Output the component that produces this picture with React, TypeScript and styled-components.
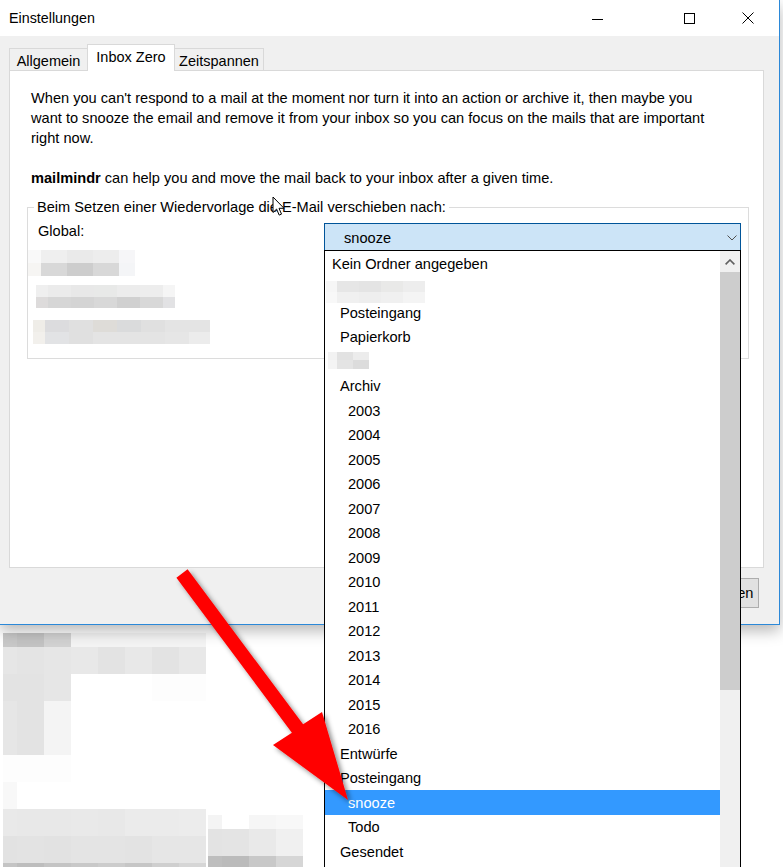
import styled, { createGlobalStyle } from 'styled-components';

const GlobalStyle = createGlobalStyle`
  body {
    margin: 0;
    background: #fff;
  }
  * {
    box-sizing: border-box;
  }
`;

type Cell = [number, string];
type MosaicRow = { h: number; cells: Cell[] };

const Page = styled.div`
  position: relative;
  width: 783px;
  height: 867px;
  overflow: hidden;
  background: #fff;
  font-family: 'Liberation Sans', Arial, sans-serif;
  font-size: 14.6px;
  color: #000;
`;

const Window = styled.div`
  position: relative;
  z-index: 2;
  width: 780px;
  height: 625px;
  display: flex;
  flex-direction: column;
  background: #f0f0f0;
  border-right: 1px solid #2b88d8;
  border-bottom: 1px solid #2b88d8;
  box-shadow: 0 6px 14px rgba(0, 0, 0, 0.28);
`;

const TitleBar = styled.div`
  height: 36px;
  flex-shrink: 0;
  display: flex;
  align-items: center;
  padding-left: 9px;
  background: #fff;
`;

const Title = styled.span`
  font-size: 14.3px;
`;

const Captions = styled.div`
  margin-left: auto;
  padding-right: 25px;
  display: flex;
  align-items: center;
`;

const CaptionIcon = styled.svg<{ $gap?: number }>`
  display: block;
  margin-left: ${(p) => p.$gap ?? 0}px;
  stroke: #000;
  stroke-width: 1;
  fill: none;
`;

const Body = styled.div`
  flex: 1;
  display: flex;
  flex-direction: column;
  padding: 9px 15px 0 9px;
`;

const TabStrip = styled.div`
  position: relative;
  z-index: 1;
  height: 26px;
  margin-bottom: -1px;
  display: flex;
  align-items: flex-end;
`;

const Tab = styled.div<{ $active?: boolean; $w: number }>`
  width: ${(p) => p.$w}px;
  height: ${(p) => (p.$active ? 27 : 23)}px;
  display: flex;
  justify-content: center;
  align-items: center;
  padding-top: ${(p) => (p.$active ? 0 : 2)}px;
  padding-bottom: ${(p) => (p.$active ? 2 : 0)}px;
  background: ${(p) => (p.$active ? '#fff' : '#f0f0f0')};
  border: 1px solid #d9d9d9;
  border-bottom: ${(p) => (p.$active ? 'none' : '1px solid #d9d9d9')};
  margin-right: -1px;
  font-size: 14.5px;
  white-space: nowrap;
`;

const Panel = styled.div`
  height: 498px;
  background: #fff;
  border: 1px solid #d9d9d9;
  padding: 17px 14px 0 17px;
`;

const Paragraph = styled.p`
  margin: 0 0 20px;
  padding: 0 26px 0 4px;
  line-height: 20px;

  &:last-of-type {
    margin-bottom: 0;
  }
`;

const GroupBox = styled.fieldset`
  margin: 9px 0 0;
  padding: 0 0 14px;
  min-width: 0;
  border: 1px solid #dcdcdc;
`;

const Legend = styled.legend`
  margin-left: 6px;
  padding: 0 3px;
  line-height: 20px;
`;

const FolderRow = styled.div`
  margin-top: 6px;
  display: flex;
  align-items: flex-start;
`;

const Label = styled.span`
  margin-left: 10px;
  line-height: 16px;
`;

const ComboWrap = styled.div`
  position: relative;
  z-index: 5;
  width: 417px;
  margin-left: auto;
  margin-right: 7px;
`;

const Combo = styled.div`
  height: 28px;
  display: flex;
  align-items: center;
  padding-left: 19px;
  padding-top: 1px;
  background: #cce4f7;
  border: 1px solid #005499;
`;

const Chevron = styled.svg`
  display: block;
  margin-left: auto;
  margin-right: 3px;
  fill: none;
  stroke: #505050;
  stroke-width: 1;
`;

const Popup = styled.div`
  position: absolute;
  left: 0;
  top: 27px;
  width: 417px;
  height: 660px;
  display: flex;
  background: #fff;
  border: 1px solid #000;
`;

const List = styled.div`
  flex: 1;
  display: flex;
  flex-direction: column;
`;

const Item = styled.div<{ $level: number; $selected?: boolean }>`
  height: 24.5px;
  flex-shrink: 0;
  display: flex;
  align-items: center;
  padding-top: 1px;
  padding-left: ${(p) => 7 + p.$level * 8}px;
  background: ${(p) => (p.$selected ? '#3399ff' : 'transparent')};
  color: ${(p) => (p.$selected ? '#fff' : '#000')};
  white-space: nowrap;
`;

const ScrollBar = styled.div`
  width: 20px;
  display: flex;
  flex-direction: column;
  background: #f0f0f0;
`;

const ScrollButton = styled.div`
  height: 21px;
  display: flex;
  justify-content: center;
  align-items: center;
`;

const Thumb = styled.div`
  height: 418px;
  background: #cdcdcd;
`;

const Footer = styled.div`
  display: flex;
  justify-content: flex-end;
  padding: 10px 5px 0 0;
`;

const Button = styled.div`
  width: 82px;
  height: 30px;
  display: flex;
  justify-content: center;
  align-items: center;
  padding-left: 6px;
  background: #e1e1e1;
  border: 1px solid #adadad;
`;

const MosaicBox = styled.div<{ $mt?: number; $ml?: number }>`
  display: flex;
  flex-direction: column;
  align-self: flex-start;
  margin-top: ${(p) => p.$mt ?? 0}px;
  margin-left: ${(p) => p.$ml ?? 0}px;
`;

const MosaicLine = styled.div<{ $h: number }>`
  height: ${(p) => p.$h}px;
  display: flex;
`;

const MosaicCell = styled.div<{ $w: number; $c: string }>`
  width: ${(p) => p.$w}px;
  background: ${(p) => p.$c};
`;

const Backdrop = styled.div`
  display: flex;
  padding: 8px 0 0 3px;
`;

const Overlay = styled.svg`
  position: absolute;
  left: 0;
  top: 0;
  z-index: 10;
  pointer-events: none;
`;

const Cursor = styled.svg`
  position: absolute;
  left: 272px;
  top: 196px;
  z-index: 11;
  pointer-events: none;
`;

function Mosaic({ rows, mt, ml }: { rows: MosaicRow[]; mt?: number; ml?: number }) {
  return (
    <MosaicBox $mt={mt} $ml={ml}>
      {rows.map((r, i) => (
        <MosaicLine key={i} $h={r.h}>
          {r.cells.map(([w, c], j) => (
            <MosaicCell key={j} $w={w} $c={c} />
          ))}
        </MosaicLine>
      ))}
    </MosaicBox>
  );
}

const blurA: MosaicRow[] = [
  { h: 13, cells: [[13, '#f9f9f9'], [26, '#efefef'], [26, '#eaeaea'], [26, '#ededed'], [16, '#f6f6f8']] },
  { h: 13, cells: [[13, '#f6f5f3'], [26, '#d8d8d8'], [26, '#cdcdcd'], [26, '#d8d8d8'], [16, '#f4f5f7']] },
];

const blurB: MosaicRow[] = [
  { h: 12, cells: [[12, '#efefef'], [23, '#ebebeb'], [23, '#e8e8e8'], [23, '#e8e9e8'], [23, '#ececec'], [23, '#ededed'], [12, '#f5f5f5']] },
  { h: 11, cells: [[12, '#dddbdb'], [23, '#d6d6d6'], [23, '#d4d4d4'], [23, '#d8d8d8'], [23, '#d0d0d0'], [23, '#d8d8d8'], [12, '#e2e2e4']] },
];

const blurC: MosaicRow[] = [
  { h: 12, cells: [[12, '#efede8'], [24, '#dcdcde'], [24, '#e0e0e0'], [24, '#dedcd8'], [24, '#dadbdc'], [24, '#e0e0e0'], [24, '#e4e4e4'], [21, '#e4e4e4']] },
  { h: 12, cells: [[12, '#f2f0ec'], [24, '#e2e3e5'], [24, '#e0e0e0'], [24, '#e4e4e4'], [24, '#e4e4e4'], [24, '#e4e4e4'], [24, '#e6e6e6'], [21, '#ececec']] },
];

const blurItem1: MosaicRow[] = [
  { h: 11, cells: [[11, '#f6f6f6'], [22, '#e6e6e6'], [22, '#e4e4e4'], [22, '#e9e9e8'], [22, '#ededed']] },
  { h: 11, cells: [[11, '#f8f8f8'], [22, '#f0f0f0'], [22, '#eeeeee'], [22, '#f0f0f0'], [22, '#f4f4f4']] },
];

const blurItem2: MosaicRow[] = [
  { h: 8, cells: [[9, '#f2f2f2'], [16, '#e2e2e2'], [16, '#ececec']] },
  { h: 9, cells: [[9, '#f4f4f4'], [16, '#e4e4e4'], [16, '#dcdcdc']] },
];

const blurBackLeft: MosaicRow[] = [
  { h: 14, cells: [[14, '#c8c8c8'], [27, '#c3c3c3'], [27, '#d2d2d2'], [135, '#f4f4f4']] },
  { h: 27, cells: [[14, '#e6e6e6'], [27, '#e4e4e4'], [27, '#e6e6e6'], [27, '#e8e8e8'], [27, '#e3e3e3'], [27, '#e8e8e8'], [27, '#e3e3e3'], [27, '#e8e8e8']] },
  { h: 27, cells: [[14, '#e3e3e3'], [27, '#e3e3e3'], [27, '#e6e6e6'], [81, '#ffffff'], [54, '#fdfdfd']] },
  { h: 27, cells: [[14, '#e6e6e6'], [27, '#e3e3e3'], [27, '#f4f4f4']] },
  { h: 27, cells: [[14, '#e6e6e6'], [27, '#e3e3e3'], [27, '#f4f4f4']] },
  { h: 27, cells: [[68, '#fdfdfd']] },
  { h: 27, cells: [[14, '#f8f8f8']] },
  { h: 27, cells: [[14, '#e9e9e9'], [27, '#e8e8e8'], [27, '#e8e8e8'], [27, '#e9e9e9'], [27, '#e8e8e8'], [27, '#ebebeb'], [27, '#ebebeb'], [27, '#ececec']] },
  { h: 27, cells: [[14, '#e2e2e2'], [27, '#e3e3e3'], [27, '#e2e2e2'], [27, '#e4e4e4'], [27, '#e4e4e4'], [27, '#e3e3e3'], [27, '#e6e6e6'], [27, '#e6e6e6']] },
  { h: 6, cells: [[14, '#c4c4c4'], [27, '#bdbdbd'], [27, '#c4c4c4'], [27, '#c8c8c8'], [27, '#cccccc'], [27, '#c6c6c6'], [27, '#cfcfcf'], [27, '#d6d6d6']] },
];

const blurBackRight: MosaicRow[] = [
  { h: 14, cells: [[14, '#f4f4f4'], [27, '#ffffff'], [27, '#f6f6f6'], [27, '#f8f8f8']] },
  { h: 27, cells: [[14, '#e3e3e3'], [27, '#e4e4e4'], [27, '#e9e9e9'], [27, '#f0f0f0']] },
  { h: 11, cells: [[14, '#bebebe'], [27, '#bbbbbb'], [27, '#c8c8c8'], [27, '#d6d6d6']] },
];

const years = ['2003', '2004', '2005', '2006', '2007', '2008', '2009', '2010', '2011', '2012', '2013', '2014', '2015', '2016'];

export default function App() {
  return (
    <Page>
      <GlobalStyle />
      <Window>
        <TitleBar>
          <Title>Einstellungen</Title>
          <Captions>
            <CaptionIcon width="11" height="11" viewBox="0 0 11 11">
              <path d="M0 6.5h11" />
            </CaptionIcon>
            <CaptionIcon $gap={81} width="11" height="11" viewBox="0 0 11 11">
              <rect x="0.5" y="0.5" width="10" height="10" />
            </CaptionIcon>
            <CaptionIcon $gap={47} width="12" height="12" viewBox="0 0 12 12">
              <path d="M0.5 0.5l11 11M11.5 0.5l-11 11" />
            </CaptionIcon>
          </Captions>
        </TitleBar>
        <Body>
          <TabStrip>
            <Tab $w={79}>Allgemein</Tab>
            <Tab $w={88} $active>Inbox Zero</Tab>
            <Tab $w={90}>Zeitspannen</Tab>
          </TabStrip>
          <Panel>
            <Paragraph>
              When you can't respond to a mail at the moment nor turn it into an action or archive it, then maybe you
              want to snooze the email and remove it from your inbox so you can focus on the mails that are important
              right now.
            </Paragraph>
            <Paragraph>
              <b>mailmindr</b> can help you and move the mail back to your inbox after a given time.
            </Paragraph>
            <GroupBox>
              <Legend>Beim Setzen einer Wiedervorlage die E-Mail verschieben nach:</Legend>
              <FolderRow>
                <Label>Global:</Label>
                <ComboWrap>
                  <Combo>
                    snooze
                    <Chevron width="10" height="6" viewBox="0 0 10 6">
                      <path d="M0.5 0.5l4.5 4.5 4.5-4.5" />
                    </Chevron>
                  </Combo>
                  <Popup>
                    <List>
                      <Item $level={0}>Kein Ordner angegeben</Item>
                      <Item $level={0}>
                        <Mosaic rows={blurItem1} ml={-6} mt={4} />
                      </Item>
                      <Item $level={1}>Posteingang</Item>
                      <Item $level={1}>Papierkorb</Item>
                      <Item $level={0}>
                        <Mosaic rows={blurItem2} ml={-4} mt={2} />
                      </Item>
                      <Item $level={1}>Archiv</Item>
                      {years.map((y) => (
                        <Item key={y} $level={2}>
                          {y}
                        </Item>
                      ))}
                      <Item $level={1}>Entwürfe</Item>
                      <Item $level={1}>Posteingang</Item>
                      <Item $level={2} $selected>
                        snooze
                      </Item>
                      <Item $level={2}>Todo</Item>
                      <Item $level={1}>Gesendet</Item>
                    </List>
                    <ScrollBar>
                      <ScrollButton>
                        <svg width="10" height="6" viewBox="0 0 10 6" fill="none" stroke="#606060" strokeWidth="1.6">
                          <path d="M0.6 5.4l4.4-4.4 4.4 4.4" />
                        </svg>
                      </ScrollButton>
                      <Thumb />
                    </ScrollBar>
                  </Popup>
                </ComboWrap>
              </FolderRow>
              <Mosaic rows={blurA} mt={-1} />
              <Mosaic rows={blurB} mt={9} ml={8} />
              <Mosaic rows={blurC} mt={12} ml={5} />
            </GroupBox>
          </Panel>
          <Footer>
            <Button>Schließen</Button>
          </Footer>
        </Body>
      </Window>
      <Backdrop>
        <Mosaic rows={blurBackLeft} />
        <Mosaic rows={blurBackRight} mt={182} ml={2} />
      </Backdrop>
      <Overlay width="783" height="867" viewBox="0 0 783 867">
        <defs>
          <filter id="arrowShadow" x="-20%" y="-20%" width="140%" height="140%">
            <feDropShadow dx="3" dy="3" stdDeviation="2.5" floodColor="#000" floodOpacity="0.45" />
          </filter>
        </defs>
        <polygon
          points="187.6,569.3 303.1,724.3 322,712 348,800 273,745 291.9,732.7 176.4,577.7"
          fill="#ff0000"
          filter="url(#arrowShadow)"
        />
      </Overlay>
      <Cursor width="13" height="21" viewBox="0 0 13 21">
        <path d="M1 1v15.5l3.6-3.4 2.6 6 2.3-1-2.5-5.8h5z" fill="#fff" stroke="#000" strokeWidth="1" strokeLinejoin="round" />
      </Cursor>
    </Page>
  );
}
